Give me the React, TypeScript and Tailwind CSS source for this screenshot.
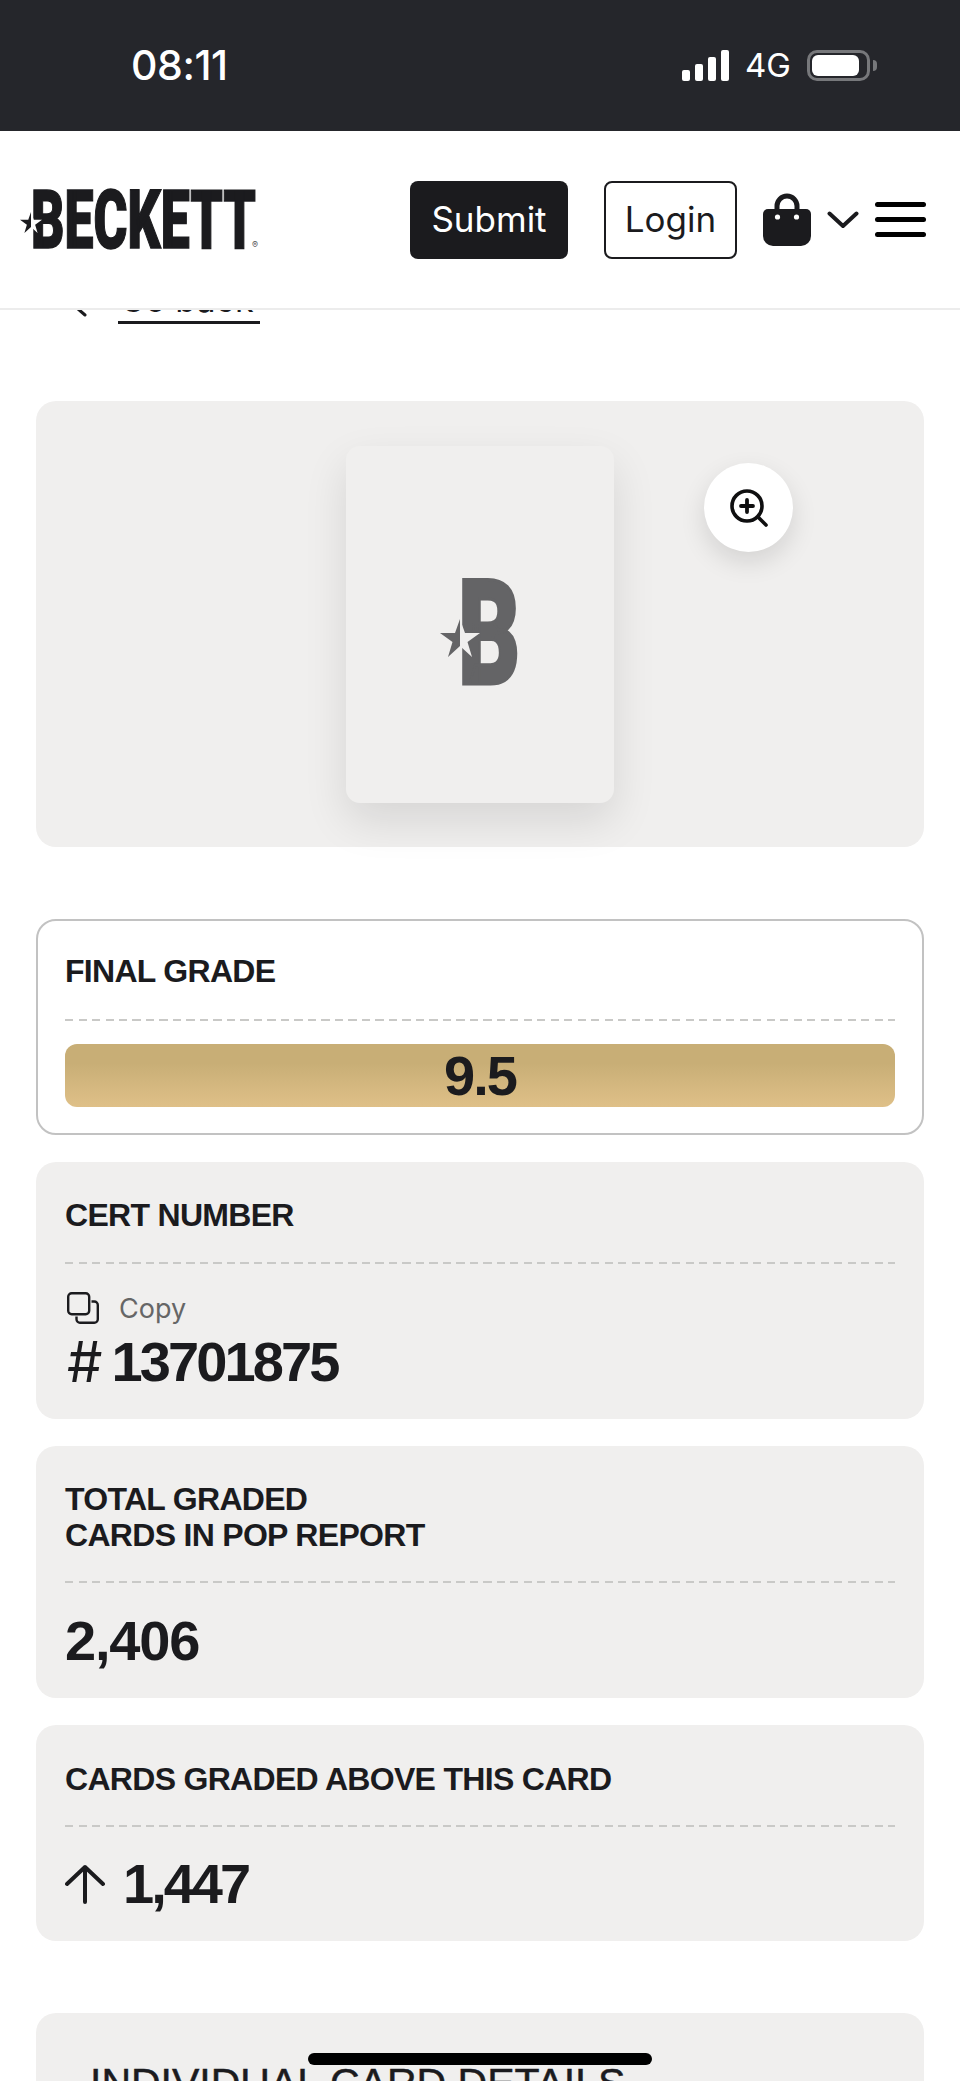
const Dashes = () => (
  <div className="h-[2px] w-full bg-[repeating-linear-gradient(90deg,#c9c9c7_0_8px,transparent_8px_13.5px)]" />
);

const StarMark = ({ className, left, right }: { className: string; left: string; right: string }) => (
  <svg viewBox="0 0 40 38" className={className}>
    <polygon points="20,0 20,27 8,38 12.5,23 0,14 15,14" fill={left} />
    <polygon points="20,0 25,14 40,14 27.5,23 32,38 20,27" fill={right} />
  </svg>
);

const StatusBar = () => (
  <div className="flex h-[131px] items-center justify-between bg-[#25262b] pl-[131px] pr-[83px] text-white">
    <span className="text-[41px] font-medium tracking-[-0.4px]">08:11</span>
    <div className="flex items-center">
      <div className="flex items-end gap-[5px]">
        <div className="h-[11px] w-[8px] rounded-[2px] bg-white" />
        <div className="h-[17px] w-[8px] rounded-[2px] bg-white" />
        <div className="h-[24px] w-[8px] rounded-[2px] bg-white" />
        <div className="h-[31px] w-[8px] rounded-[2px] bg-white" />
      </div>
      <span className="ml-[16px] text-[33px] leading-none">4G</span>
      <div className="ml-[16px] flex items-center">
        <div className="h-[31px] w-[63px] rounded-[10px] border-[3px] border-[#77787b] p-[2px]">
          <div className="h-full w-[47px] rounded-[6px] bg-white" />
        </div>
        <div className="ml-[3px] h-[11px] w-[4px] rounded-r-full bg-[#77787b]" />
      </div>
    </div>
  </div>
);

const Logo = () => (
  <div className="relative ml-[31px] h-[59px] w-[225px]">
    <span className="absolute left-0 top-[-10px] origin-left scale-x-[0.64] whitespace-nowrap font-['Roboto',sans-serif] text-[81px] font-black leading-none text-[#1b1b1e] [-webkit-text-stroke:1.5px_#1b1b1e]">
      BECKETT
    </span>
    <span className="absolute bottom-[0px] right-[-2px] text-[9px] leading-none text-[#555]">®</span>
    <StarMark className="absolute left-[-11px] top-[22px] h-[21px] w-[22px]" left="#1b1b1e" right="#ffffff" />
  </div>
);

const Header = () => (
  <header className="relative z-10 flex h-[179px] items-center border-b-2 border-[#ececec] bg-white text-[#1b1b1e]">
    <Logo />
    <div className="ml-auto mr-[34px] flex items-center">
      <button className="h-[78px] w-[158px] rounded-[8px] bg-[#1b1b1e] text-[35px] text-white">Submit</button>
      <button className="ml-[36px] h-[78px] w-[133px] rounded-[8px] border-2 border-[#1b1b1e] text-[35px]">Login</button>
      <svg viewBox="0 0 48 54" className="ml-[26px] h-[54px] w-[48px]">
        <path d="M14 18V13a10 10 0 0 1 20 0v5" fill="none" stroke="#1b1b1e" strokeWidth="5" />
        <path d="M5 16h38a5 5 0 0 1 5 5v22a10 10 0 0 1-10 10H10A10 10 0 0 1 0 43V21a5 5 0 0 1 5-5z" fill="#1b1b1e" />
        <circle cx="14.5" cy="24" r="2.6" fill="#fff" />
        <circle cx="33.5" cy="24" r="2.6" fill="#fff" />
      </svg>
      <svg viewBox="0 0 32 18" className="ml-[16px] h-[18px] w-[32px]">
        <path d="M2.5 2.5 16 15 29.5 2.5" fill="none" stroke="#1b1b1e" strokeWidth="4" strokeLinecap="round" strokeLinejoin="round" />
      </svg>
      <div className="ml-[16px] flex w-[51px] flex-col gap-[9.5px]">
        <div className="h-[5.5px] rounded-full bg-black" />
        <div className="h-[5.5px] rounded-full bg-black" />
        <div className="h-[5.5px] rounded-full bg-black" />
      </div>
    </div>
  </header>
);

const ImagePanel = () => (
  <div className="relative flex h-[446px] items-center justify-center rounded-[20px] bg-[#f0efee]">
    <div className="relative flex h-[357px] w-[268px] items-center justify-center rounded-[14px] bg-[#f0efee] shadow-[0_18px_44px_rgba(0,0,0,0.11)]">
      <div className="relative ml-[17px] mt-[17px] h-[108px] w-[57px]">
        <span className="absolute left-[-2px] top-[-17px] origin-left scale-x-[0.66] font-['Roboto',sans-serif] text-[146px] font-black leading-none text-[#646466] [-webkit-text-stroke:3px_#646466]">
          B
        </span>
        <StarMark className="absolute left-[-20px] top-[40px] h-[38px] w-[40px]" left="#646466" right="#f0efee" />
      </div>
    </div>
    <button className="absolute right-[131px] top-[62px] flex h-[89px] w-[89px] items-center justify-center rounded-full bg-white shadow-[0_10px_26px_rgba(0,0,0,0.12)]">
      <svg viewBox="0 0 38 38" className="h-[38px] w-[38px]" fill="none" stroke="#0f0f10" strokeLinecap="round">
        <circle cx="17" cy="17" r="15" strokeWidth="3.6" />
        <path d="M17 11v12M11 17h12" strokeWidth="3.8" />
        <path d="M28 28l8 8" strokeWidth="3.6" />
      </svg>
    </button>
  </div>
);

const Title = ({ children }: { children: React.ReactNode }) => (
  <h3 className="font-['Liberation_Sans',sans-serif] text-[32px] font-bold leading-[36px] tracking-[-0.7px] text-[#1b1b1e]">{children}</h3>
);

const Value = ({ children, className }: { children: React.ReactNode; className: string }) => (
  <div className={`font-['Liberation_Sans',sans-serif] text-[56px] font-bold leading-none text-[#1b1b1e] ${className}`}>{children}</div>
);

export default function App() {
  return (
    <div className="relative h-[2081px] overflow-hidden bg-white font-['Inter',sans-serif]">
      <StatusBar />
      <Header />
      <main className="px-[36px]">
        <div className="relative -mt-[16px] mb-[77px] ml-[82px] h-[30px] w-[142px] border-b-[3px] border-[#1b1b1e]">
          <span className="absolute left-[2px] top-[-9px] text-[34px] leading-[30px] text-[#1b1b1e]">Go back</span>
          <svg viewBox="0 0 12 10" className="absolute left-[-42px] top-[14px] h-[10px] w-[12px]" fill="none" stroke="#1b1b1e" strokeWidth="3" strokeLinecap="round">
            <path d="M1 0l8 7" />
          </svg>
        </div>
        <ImagePanel />

        <section className="mt-[72px] h-[216px] rounded-[20px] border-2 border-[#c2c2c2] bg-white px-[27px] pt-[32px]">
          <Title>FINAL GRADE</Title>
          <div className="mt-[30px]">
            <Dashes />
          </div>
          <div className="mt-[23px] flex h-[63px] items-center justify-center rounded-[12px] bg-linear-to-b from-[#c8ae76] from-30% to-[#dfc088]">
            <Value className="tracking-[-2px]">9.5</Value>
          </div>
        </section>

        <section className="mt-[27px] h-[257px] rounded-[20px] bg-[#f0efee] px-[29px] pt-[35px]">
          <Title>CERT NUMBER</Title>
          <div className="mt-[29px]">
            <Dashes />
          </div>
          <div className="mt-[28px] flex items-center">
            <svg viewBox="0 0 32 32" className="ml-[2px] h-[32px] w-[32px]" fill="none" stroke="#1b1b1e" strokeWidth="2.4" strokeLinejoin="round">
              <rect x="1.2" y="1.2" width="21" height="21" rx="3.5" />
              <path d="M24.5 9.5h2.8a3.5 3.5 0 0 1 3.5 3.5v14.3a3.5 3.5 0 0 1-3.5 3.5H13a3.5 3.5 0 0 1-3.5-3.5v-2.8" />
            </svg>
            <span className="ml-[20px] text-[27px] leading-none text-[#666666]">Copy</span>
          </div>
          <div className="mt-[10px] flex items-center">
            <span className="ml-[2px] text-[56px] font-normal leading-none text-[#1b1b1e]">#</span>
            <div className="ml-[9px]">
              <Value className="tracking-[-2.9px]">13701875</Value>
            </div>
          </div>
        </section>

        <section className="mt-[27px] h-[252px] rounded-[20px] bg-[#f0efee] px-[29px] pt-[35px]">
          <Title>
            TOTAL GRADED
            <br />
            CARDS IN POP REPORT
          </Title>
          <div className="mt-[28px]">
            <Dashes />
          </div>
          <div className="mt-[30px]">
            <Value className="tracking-[-1.2px]">2,406</Value>
          </div>
        </section>

        <section className="mt-[27px] h-[216px] rounded-[20px] bg-[#f0efee] px-[29px] pt-[36px]">
          <Title>CARDS GRADED ABOVE THIS CARD</Title>
          <div className="mt-[28px]">
            <Dashes />
          </div>
          <div className="mt-[29px] flex items-center">
            <svg viewBox="0 0 40 40" className="h-[40px] w-[40px]" fill="none" stroke="#1b1b1e" strokeWidth="4" strokeLinecap="round" strokeLinejoin="round">
              <path d="M20 38V3M2 20 20 3l18 17" />
            </svg>
            <div className="ml-[18px]">
              <Value className="tracking-[-3px]">1,447</Value>
            </div>
          </div>
        </section>

        <section className="mt-[72px] h-[200px] rounded-[20px] bg-[#f0efee] px-[54px] pt-[50px]">
          <h2 className="whitespace-nowrap font-['Liberation_Sans',sans-serif] text-[41px] font-normal leading-none text-[#1b1b1e] [-webkit-text-stroke:0.5px_#1b1b1e]">INDIVIDUAL CARD DETAILS</h2>
        </section>
      </main>
      <div className="absolute bottom-[16px] left-[308px] h-[12px] w-[344px] rounded-full bg-black" />
    </div>
  );
}
